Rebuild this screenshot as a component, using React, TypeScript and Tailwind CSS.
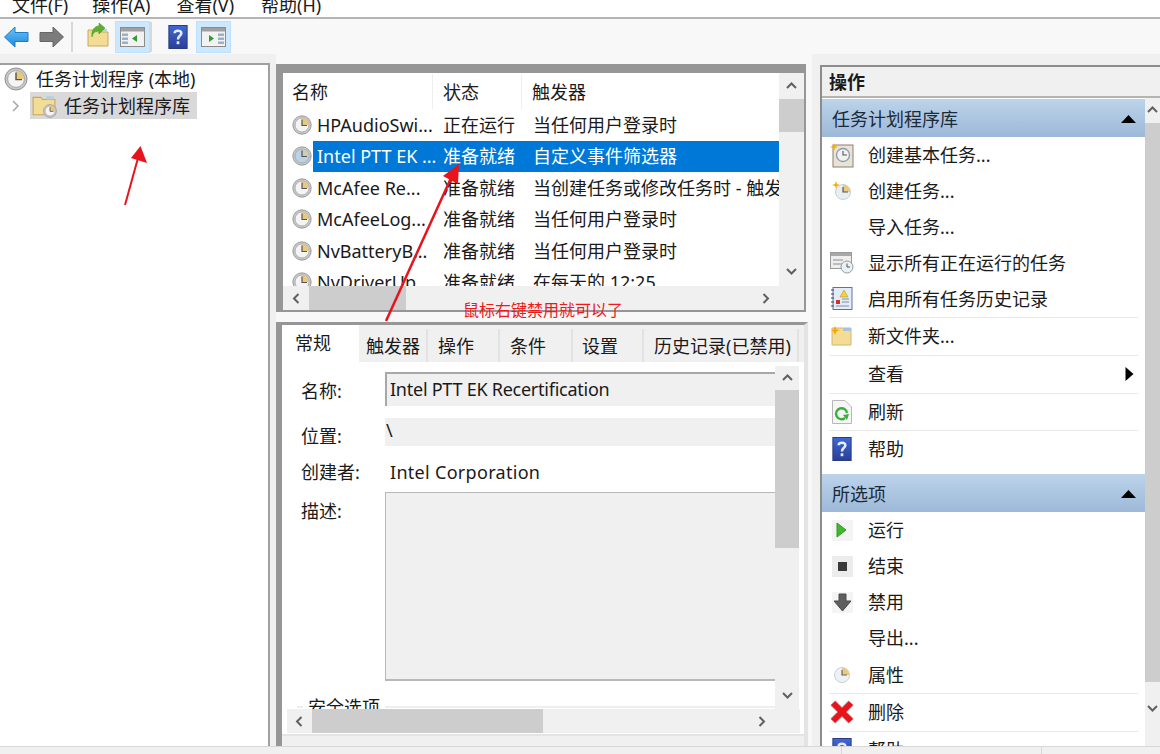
import React from "react";

const FONT = { fontFamily: '"Noto Sans","Noto Sans CJK SC",sans-serif' };

function Clock({ s = 20, face = "#f4f4f4", wedge = "#e8c87a", ring = "#a4a4a4" }: { s?: number; face?: string; wedge?: string; ring?: string }) {
  return (
    <svg width={s} height={s} viewBox="0 0 20 20" className="shrink-0">
      <circle cx="10" cy="10" r="9.2" fill="#c8c8c8" stroke="#8e8e8e" strokeWidth="0.8" />
      <circle cx="10" cy="10" r="7" fill={face} stroke={ring} strokeWidth="0.8" />
      <path d="M10 10V3.300A6.700 6.700 0 0 1 16.700 10Z" fill={wedge} />
      <path d="M10 4.500V10.500H15" fill="none" stroke="#555" strokeWidth="1.2" />
    </svg>
  );
}

function Chev({ d }: { d: "u" | "d" | "l" | "r" }) {
  const p = { u: "M2 8L6.500 3.500L11 8", d: "M2 4L6.500 8.500L11 4", l: "M8.500 2L4 6.500L8.500 11", r: "M4.500 2L9 6.500L4.500 11" }[d];
  return (
    <svg width="13" height="13" viewBox="0 0 13 13">
      <path d={p} fill="none" stroke="#606060" strokeWidth="2" />
    </svg>
  );
}

function Help({ w = 20, h = 25 }: { w?: number; h?: number }) {
  return (
    <svg width={w} height={h} viewBox="0 0 20 25" className="shrink-0">
      <defs>
        <linearGradient id="hb" x1="0" y1="0" x2="0" y2="1">
          <stop offset="0" stopColor="#3f68d8" />
          <stop offset="1" stopColor="#2a3f94" />
        </linearGradient>
      </defs>
      <rect x="0.500" y="0.500" width="19" height="24" fill="url(#hb)" stroke="#27387f" />
      <path d="M6.500 8.500C6.500 5 13.500 5 13.500 8.500C13.500 11.500 10 11 10 15" fill="none" stroke="#e8ecf8" strokeWidth="2.600" />
      <rect x="8.600" y="17" width="2.800" height="3" fill="#e8ecf8" />
    </svg>
  );
}

function Pane({ mirror }: { mirror?: boolean }) {
  return (
    <svg width="25" height="20" viewBox="0 0 25 20">
      <rect x="0.500" y="0.500" width="24" height="19" fill="#f2f2f2" stroke="#8c8c8c" />
      <rect x="1" y="1" width="23" height="3.500" fill="#a0a0a0" />
      {mirror ? (
        <>
          <path d="M8 8L13 11.500L8 15Z" fill="#2ca02c" />
          <rect x="17" y="6.500" width="6" height="2.500" fill="#9ab0c4" />
          <rect x="17" y="10.500" width="6" height="2.500" fill="#9ab0c4" />
          <rect x="17" y="14.500" width="6" height="2.500" fill="#9ab0c4" />
        </>
      ) : (
        <>
          <path d="M17 8L12 11.500L17 15Z" fill="#2ca02c" />
          <rect x="2" y="6.500" width="6" height="2.500" fill="#9ab0c4" />
          <rect x="2" y="10.500" width="6" height="2.500" fill="#9ab0c4" />
          <rect x="2" y="14.500" width="6" height="2.500" fill="#9ab0c4" />
        </>
      )}
    </svg>
  );
}

function Folder({ w = 22, h = 20 }: { w?: number; h?: number }) {
  return (
    <svg width={w} height={h} viewBox="0 0 22 20" className="shrink-0">
      <path d="M1 3H8L10 5H21V19H1Z" fill="#f3dc94" stroke="#c8a860" />
      <rect x="13" y="2" width="7" height="3" fill="#b8cfe0" />
    </svg>
  );
}

function Star() {
  return <path d="M4 0L5 3L8 4L5 5L4 8L3 5L0 4L3 3Z" fill="#f5b000" />;
}

const I = {
  basic: (
    <svg width="24" height="25" viewBox="0 0 24 25">
      <rect x="3" y="2" width="20" height="22" fill="#e9e3d6" stroke="#8a8072" />
      <circle cx="13" cy="12" r="6.500" fill="#f2f2f2" stroke="#8b9aa8" strokeWidth="1.300" />
      <path d="M13 8V12H17" fill="none" stroke="#555" strokeWidth="1.100" />
      <Star />
    </svg>
  ),
  task: (
    <svg width="20" height="20" viewBox="0 0 20 20">
      <circle cx="11" cy="11" r="7.500" fill="#e8eef2" stroke="#c6d0d8" />
      <path d="M11 11V3.500A7.500 7.500 0 0 1 18.500 11Z" fill="#ecc982" />
      <path d="M11 6V11H16" fill="none" stroke="#555" strokeWidth="1.200" />
      <Star />
    </svg>
  ),
  running: (
    <svg width="24" height="22" viewBox="0 0 24 22">
      <rect x="0.500" y="0.500" width="21" height="16" fill="#eeeeee" stroke="#9a9a9a" />
      <rect x="1" y="1" width="20" height="3" fill="#a8a8a8" />
      <rect x="3" y="7" width="10" height="2" fill="#bdbdbd" />
      <rect x="3" y="11" width="10" height="2" fill="#bdbdbd" />
      <circle cx="17" cy="15" r="6" fill="#eaf0f4" stroke="#8ca0b0" />
      <path d="M17 11.500V15H20" fill="none" stroke="#555" />
    </svg>
  ),
  log: (
    <svg width="22" height="24" viewBox="0 0 22 24">
      <rect x="2" y="0.500" width="19" height="22" fill="#e4ecf6" stroke="#5a74a8" />
      <path d="M0 3H3M0 7H3M0 11H3M0 15H3M0 19H3" stroke="#444" />
      <path d="M13 3L17 10H9Z" fill="#f5d23c" stroke="#a88c20" strokeWidth="0.500" />
      <rect x="5" y="13" width="4" height="4" fill="#d23030" />
      <path d="M11 12H18M11 15H18M5 19H18" stroke="#7890b0" />
    </svg>
  ),
  folder: (
    <svg width="22" height="20" viewBox="0 0 22 20">
      <path d="M1 2H20V19H1Z" fill="#f4dc94" stroke="#d0b878" />
      <rect x="12" y="2" width="8" height="3" fill="#a8c4dc" />
      <path d="M4 0L5.500 3.500L9 4L5.500 5.500L4 9L2.500 5.500L0 4L2.500 3.500Z" fill="#f5a800" />
    </svg>
  ),
  refresh: (
    <svg width="20" height="24" viewBox="0 0 20 24">
      <path d="M0.500 0.500H13L19.500 7V23.500H0.500Z" fill="#f6f6f6" stroke="#b8b8b8" />
      <path d="M15 13A5.500 5.500 0 1 0 13 18" fill="none" stroke="#3cae3c" strokeWidth="2.400" />
      <path d="M11 15L17 14L15 20Z" fill="#3cae3c" />
    </svg>
  ),
  run: (
    <div className="w-[21px] h-[21px] bg-[#f4f4f4] flex items-center justify-center">
      <svg width="12" height="16" viewBox="0 0 12 16">
        <path d="M1 1L10 8L1 15Z" fill="#42b82e" stroke="#2f9a22" />
      </svg>
    </div>
  ),
  stop: (
    <div className="w-[21px] h-[21px] bg-[#ececec] flex items-center justify-center">
      <div className="w-[9px] h-[9px] bg-[#3a3a3a]" />
    </div>
  ),
  disable: (
    <div className="w-[21px] h-[21px] bg-[#f4f4f4] flex items-center justify-center">
      <svg width="19" height="19" viewBox="0 0 19 19">
        <path d="M6 1H13V8H18L9.500 18L1 8H6Z" fill="#5e5e5e" stroke="#4a4a4a" />
      </svg>
    </div>
  ),
  prop: (
    <svg width="18" height="18" viewBox="0 0 18 18">
      <circle cx="9" cy="9" r="7.500" fill="#eef2f4" stroke="#c8d2da" />
      <path d="M9 9V1.500A7.500 7.500 0 0 1 16.500 9Z" fill="#ecc982" />
      <path d="M9 4V9H14" fill="none" stroke="#666" strokeWidth="1.200" />
    </svg>
  ),
  del: (
    <svg width="26" height="26" viewBox="0 0 26 26">
      <path d="M4 4L22 22M22 4L4 22" stroke="#c8c8c8" strokeWidth="7.500" />
      <path d="M4 4L22 22M22 4L4 22" stroke="#e8141c" strokeWidth="6" />
    </svg>
  ),
};

function ActionRow({ icon, text, tall, arrow }: { icon?: React.ReactNode; text: string; tall?: boolean; arrow?: boolean }) {
  return (
    <div className={tall ? "h-[37px] pb-[1px] flex items-center" : "h-9 flex items-center"}>
      <div className="w-[46px] pl-[7px] flex justify-start items-center shrink-0">
        <div className="w-[26px] flex justify-center">{icon}</div>
      </div>
      <span className="flex-1 whitespace-nowrap">{text}</span>
      {arrow && (
        <svg width="9" height="14" viewBox="0 0 9 14" className="mr-[11px]">
          <path d="M0.500 0L8.500 7L0.500 14Z" fill="#000" />
        </svg>
      )}
    </div>
  );
}

function Divider() {
  return <div className="h-px mx-[7px] bg-[#e9e9e9]" />;
}

function SectionHead({ text }: { text: string }) {
  return (
    <div className="h-[38px] pt-[2px] flex items-center justify-between pl-[10px] pr-[9px] bg-gradient-to-b from-[#bcd3ea] to-[#9db9d8] text-[#1a2a3a]">
      <span>{text}</span>
      <svg width="15" height="8" viewBox="0 0 15 8">
        <path d="M7.500 0L15 8H0Z" fill="#000" />
      </svg>
    </div>
  );
}

const rows = [
  ["HPAudioSwi...", "正在运行", "当任何用户登录时"],
  ["Intel PTT EK ...", "准备就绪", "自定义事件筛选器"],
  ["McAfee Re...", "准备就绪", "当创建任务或修改任务时 - 触发"],
  ["McAfeeLog...", "准备就绪", "当任何用户登录时"],
  ["NvBatteryB...", "准备就绪", "当任何用户登录时"],
  ["NvDriverUp...", "准备就绪", "在每天的 12:25"],
];

function ListRow({ r, sel }: { r: string[]; sel: boolean }) {
  return (
    <div className="h-[31.5px] flex items-center whitespace-nowrap">
      <div className="w-[30px] pl-[9px] shrink-0">
        <Clock s={20} face={sel ? "#b9d3e8" : "#f4f4f4"} wedge={sel ? "#c8d0b0" : "#e8c87a"} />
      </div>
      <div className={sel ? "flex-1 h-full flex items-center overflow-hidden bg-[#0078d7] text-white" : "flex-1 h-full flex items-center overflow-hidden"}>
        <div className="w-[130px] pl-[4px] shrink-0">{r[0]}</div>
        <div className="w-[90px] shrink-0">{r[1]}</div>
        <div>{r[2]}</div>
      </div>
    </div>
  );
}

function Tab({ text, cls }: { text: string; cls: string }) {
  return <div className={`${cls} h-[33px] bg-[#f0f0f0] border-r-2 border-[#e2e2e2] flex items-center whitespace-nowrap`}>{text}</div>;
}

function FieldLabel({ text, cls }: { text: string; cls: string }) {
  return <div className={`${cls} w-[103px] pl-[19px] shrink-0`}>{text}</div>;
}

export default function App() {
  return (
    <div style={FONT} className="relative w-[1160px] h-[754px] overflow-hidden bg-[#f0f0f0] text-[18px] leading-[24px] text-[#1a1a1a]">
      {/* menu */}
      <div className="h-[19px] bg-white border-b-2 border-[#b4b4b4] overflow-hidden flex pl-[12px]">
        <div className="flex -mt-[7px]">
          <span>文件(F)</span>
          <span className="ml-[24px]">操作(A)</span>
          <span className="ml-[26px]">查看(V)</span>
          <span className="ml-[27px]">帮助(H)</span>
        </div>
      </div>
      {/* toolbar */}
      <div className="h-[35px] bg-[#f8f8f8] flex items-center">
        <svg width="25" height="22" viewBox="0 0 25 22" className="ml-[4px]">
          <defs>
            <linearGradient id="bk" x1="0" y1="0" x2="0" y2="1">
              <stop offset="0" stopColor="#6cc4f8" />
              <stop offset="1" stopColor="#1c88dc" />
            </linearGradient>
          </defs>
          <path d="M0.500 11L11 1V6.500H24V15.500H11V21Z" fill="url(#bk)" stroke="#1c7cc8" />
        </svg>
        <svg width="25" height="22" viewBox="0 0 25 22" className="ml-[10px]">
          <path d="M24.500 11L14 1V6.500H1V15.500H14V21Z" fill="#7c7c7c" stroke="#666" />
        </svg>
        <div className="w-[2px] h-[30px] bg-[#d8d8d8] ml-[7px]" />
        <div className="ml-[14px] relative">
          <Folder w={22} h={22} />
          <svg width="16" height="16" viewBox="0 0 16 16" className="absolute left-[3px] -top-[3px]">
            <path d="M2 14C3 9 6 8 9 8V11L15 5L9 0V3C5 3 1 7 2 14Z" fill="#5cb030" stroke="#3f8a20" strokeWidth="0.500" />
          </svg>
        </div>
        <div className="ml-[6px] w-[35px] h-[32px] bg-[#cce8ff] border border-[#bfe0fa] flex items-center justify-center">
          <Pane />
        </div>
        <div className="w-[2px] h-[30px] bg-[#d8d8d8]" />
        <div className="ml-[16px]">
          <Help w={20} h={24} />
        </div>
        <div className="ml-[8px] w-[35px] h-[32px] bg-[#cce8ff] border border-[#bfe0fa] flex items-center justify-center">
          <Pane mirror />
        </div>
      </div>

      <div className="flex h-[700px]">
        {/* left */}
        <div className="w-[270px] h-[694px] mt-[9px] bg-white border-t-2 border-r-2 border-[#a0a0a0] shrink-0">
          <div className="h-[27px] pt-[1px] flex items-center pl-[4px] gap-[8px] whitespace-nowrap">
            <Clock s={24} />
            <span>任务计划程序 (本地)</span>
          </div>
          <div className="flex items-center h-[27px]">
            <div className="w-[30px] pl-[11px] shrink-0">
              <svg width="10" height="12" viewBox="0 0 10 12">
                <path d="M2 1L7 6L2 11" fill="none" stroke="#a6a6a6" strokeWidth="1.500" />
              </svg>
            </div>
            <div className="h-[27px] pt-[1px] w-[167px] bg-[#d9d9d9] flex items-center gap-[7px] whitespace-nowrap">
              <div className="relative w-[27px] h-[24px] pl-[2px] shrink-0">
                <Folder w={24} h={22} />
                <div className="absolute right-0 bottom-0">
                  <Clock s={14} />
                </div>
              </div>
              <span>任务计划程序库</span>
            </div>
          </div>
        </div>

        {/* centre */}
        <div className="w-[536px] ml-[6px] bg-[#f8f8f8] shrink-0">
          <div className="w-[530px] h-[248px] mt-[10px] border-l-[7px] border-r-[2px] border-t-[9px] border-b-[2px] border-[#969696] bg-white flex flex-col overflow-hidden">
            <div className="flex h-[213px] shrink-0">
              <div className="flex-1 min-w-0 overflow-hidden">
                <div className="h-[36px] pt-[1px] flex items-center whitespace-nowrap">
                  <div className="w-[150px] h-full pl-[9px] flex items-center border-r border-[#eeeeee] shrink-0">名称</div>
                  <div className="w-[89px] h-full pl-[10px] flex items-center border-r border-[#eeeeee] shrink-0">状态</div>
                  <div className="pl-[10px]">触发器</div>
                </div>
                {rows.map((r, i) => (
                  <ListRow key={i} r={r} sel={i === 1} />
                ))}
              </div>
              <div className="w-[25px] h-full bg-[#f0f0f0] flex flex-col items-center shrink-0">
                <div className="h-[26px] flex items-center">
                  <Chev d="u" />
                </div>
                <div className="w-full h-[33px] bg-[#cdcdcd]" />
                <div className="flex-1" />
                <div className="h-[30px] flex items-center">
                  <Chev d="d" />
                </div>
              </div>
            </div>
            <div className="h-[24px] flex bg-[#f0f0f0] shrink-0">
              <div className="w-[26px] flex items-center justify-center shrink-0">
                <Chev d="l" />
              </div>
              <div className="w-[97px] bg-[#cdcdcd] shrink-0" />
              <div className="flex-1" />
              <div className="w-[52px] pr-[26px] flex items-center justify-center shrink-0">
                <Chev d="r" />
              </div>
            </div>
          </div>

          <div className="h-[424px] mt-[10px] w-[532px] border-l-[6px] border-t-[3px] border-r-[4px] border-l-[#969696] border-t-[#969696] border-r-[#e4e4e4] bg-[#f0f0f0] flex flex-col">
            <div className="flex h-[37px] items-end shrink-0">
              <div className="w-[77px] h-[37px] bg-white pl-[13px] pt-[6px] shrink-0">常规</div>
              <Tab text="触发器" cls="w-[69px] pl-[7px]" />
              <Tab text="操作" cls="w-[72px] pl-[10px]" />
              <Tab text="条件" cls="w-[73px] pl-[10px]" />
              <Tab text="设置" cls="w-[71px] pl-[9px]" />
              <Tab text="历史记录(已禁用)" cls="w-[155px] pl-[10px]" />
            </div>
            <div className="h-[372px] w-[522px] bg-white flex flex-col overflow-hidden shrink-0">
              <div className="flex h-[347px] shrink-0">
                <div className="w-[493px] overflow-hidden pt-[10px] shrink-0">
                  <div className="flex">
                    <FieldLabel text="名称:" cls="pt-[7px]" />
                    <div className="flex-1 h-[34px] pl-[3px] pb-[3px] flex items-center bg-[#f0f0f0] border-t-2 border-l-2 border-[#a8a8a8] whitespace-nowrap tracking-[-0.25px]">Intel PTT EK Recertification</div>
                  </div>
                  <div className="flex h-[28px] mt-[12px]">
                    <FieldLabel text="位置:" cls="pt-[6px]" />
                    <div className="flex-1 h-[28px] pl-[1px] pb-[4px] flex items-center bg-[#f0f0f0]">\</div>
                  </div>
                  <div className="flex mt-[14px] h-[24px] items-center">
                    <FieldLabel text="创建者:" cls="" />
                    <div className="pl-[5px] whitespace-nowrap tracking-[0.3px]">Intel Corporation</div>
                  </div>
                  <div className="flex mt-[8px]">
                    <FieldLabel text="描述:" cls="pt-[7px]" />
                    <div className="flex-1 h-[189px] bg-[#f0f0f0] border-t border-l border-b-2 border-[#b8b8b8]" />
                  </div>
                  <div className="relative mt-[25px] ml-[15px] h-[20px] border-t-2 border-[#eeeeee]">
                    <span className="absolute left-[6px] -top-[13px] bg-white px-[5px]">安全选项</span>
                  </div>
                </div>
                <div className="w-[24px] mt-[4px] bg-[#f0f0f0] flex flex-col items-center shrink-0">
                  <div className="h-[24px] flex items-center">
                    <Chev d="u" />
                  </div>
                  <div className="w-full h-[158px] bg-[#cdcdcd]" />
                  <div className="flex-1" />
                  <div className="h-[26px] mb-px flex items-center">
                    <Chev d="d" />
                  </div>
                </div>
              </div>
              <div className="h-[24px] ml-[5px] mr-[4px] flex bg-[#f0f0f0] shrink-0">
                <div className="w-[25px] flex items-center justify-center shrink-0">
                  <Chev d="l" />
                </div>
                <div className="w-[231px] bg-[#cdcdcd] shrink-0" />
                <div className="flex-1" />
                <div className="w-[52px] pr-[26px] flex items-center justify-center shrink-0">
                  <Chev d="r" />
                </div>
              </div>
            </div>
            <div className="flex-1 border-t-2 border-[#e4e4e4]" />
          </div>
        </div>

        {/* right */}
        <div className="w-[340px] ml-[8px] h-[692px] mt-[11px] border-l-2 border-t-2 border-[#8c8c8c] flex flex-col bg-white shrink-0">
          <div className="h-[31px] pt-[1px] bg-[#f0f0f0] border-b-2 border-[#b4b4b4] flex items-center pl-[7px] font-bold shrink-0">操作</div>
          <div className="flex flex-1 min-h-0">
            <div className="w-[323px] overflow-hidden shrink-0 pt-[1px]">
              <SectionHead text="任务计划程序库" />
              <ActionRow icon={I.basic} text="创建基本任务..." />
              <ActionRow icon={I.task} text="创建任务..." />
              <ActionRow text="导入任务..." />
              <ActionRow icon={I.running} text="显示所有正在运行的任务" />
              <ActionRow icon={I.log} text="启用所有任务历史记录" />
              <Divider />
              <ActionRow icon={I.folder} text="新文件夹..." tall />
              <Divider />
              <ActionRow text="查看" tall arrow />
              <Divider />
              <ActionRow icon={I.refresh} text="刷新" />
              <Divider />
              <ActionRow icon={<Help w={20} h={24} />} text="帮助" />
              <div className="h-[7px]" />
              <SectionHead text="所选项" />
              <ActionRow icon={I.run} text="运行" />
              <ActionRow icon={I.stop} text="结束" />
              <ActionRow icon={I.disable} text="禁用" />
              <ActionRow text="导出..." tall />
              <ActionRow icon={I.prop} text="属性" />
              <Divider />
              <ActionRow icon={I.del} text="删除" tall />
              <Divider />
              <ActionRow icon={<Help w={20} h={24} />} text="帮助" />
            </div>
            <div className="flex-1 bg-[#f0f0f0] flex flex-col items-center">
              <div className="h-[26px] flex items-center">
                <Chev d="u" />
              </div>
              <div className="w-full h-[570px] bg-[#cdcdcd]" />
              <div className="h-[76px] pb-[22px] flex items-center">
                <Chev d="d" />
              </div>
            </div>
          </div>
        </div>
      </div>

      {/* status bar */}
      <div className="absolute left-0 right-0 bottom-0 h-[8px] bg-[#f0f0f0] border-t border-[#d8d8d8] flex">
        <div className="w-[842px] border-r border-[#d8d8d8]" />
        <div className="w-[200px] border-r border-[#d8d8d8]" />
      </div>

      {/* annotations */}
      <svg width="1160" height="754" viewBox="0 0 1160 754" className="absolute left-0 top-0 pointer-events-none">
        <path d="M125 205L138 158" stroke="#e8141c" strokeWidth="2" />
        <path d="M140.500 146L147 163L131 158Z" fill="#e8141c" />
        <path d="M386 321L451 178" stroke="#e8141c" strokeWidth="2.500" />
        <path d="M459 164L458 184L443 176Z" fill="#e8141c" />
      </svg>
      <div className="absolute left-[463px] top-[298px] text-[16px] text-[#f01818] whitespace-nowrap">鼠标右键禁用就可以了</div>
    </div>
  );
}
